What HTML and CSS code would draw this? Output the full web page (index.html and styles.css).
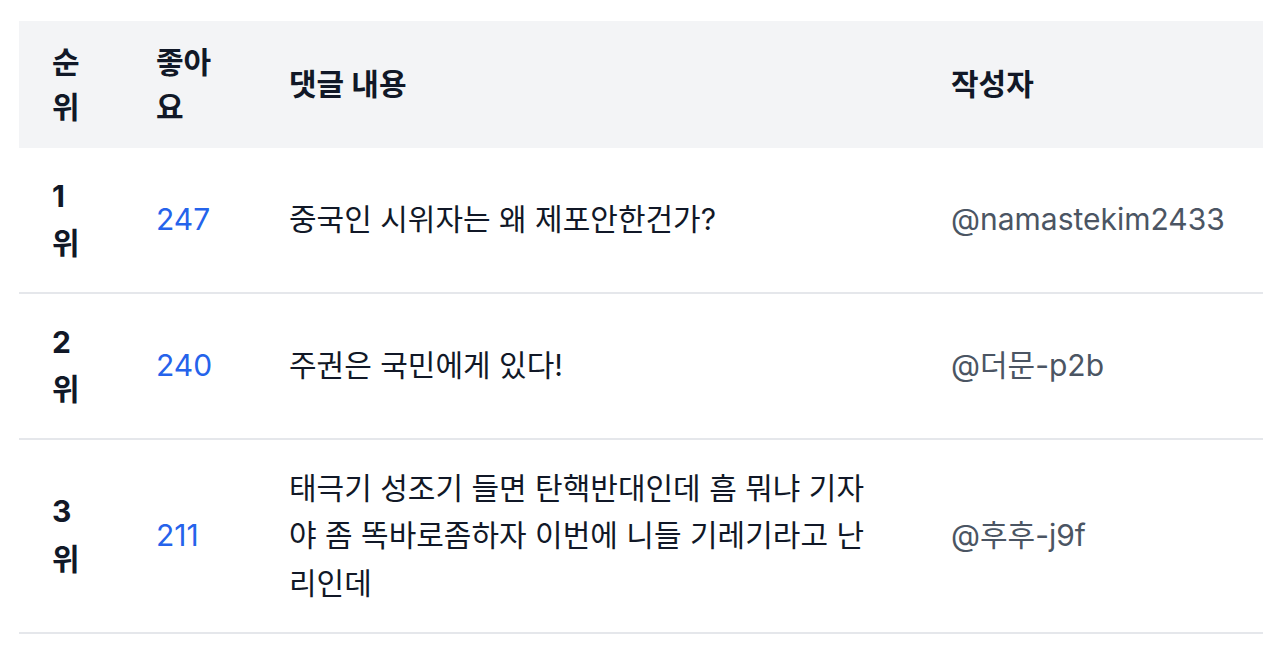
FILE: index.html
```html
<!DOCTYPE html>
<html lang="ko">
<head>
<meta charset="utf-8">
<link rel="stylesheet" href="styles.css">
</head>
<body>
<div class="page">
  <table class="ranking">
    <colgroup>
      <col class="c-rank">
      <col class="c-likes">
      <col class="c-text">
      <col class="c-author">
    </colgroup>
    <thead>
      <tr>
        <th class="rank">순위</th>
        <th>좋아요</th>
        <th>댓글 내용</th>
        <th>작성자</th>
      </tr>
    </thead>
    <tbody>
      <tr>
        <td class="rank">1위</td>
        <td class="likes">247</td>
        <td class="text"><div class="comment">중국인 시위자는 왜 제포안한건가?</div></td>
        <td class="author">@namastekim2433</td>
      </tr>
      <tr>
        <td class="rank">2위</td>
        <td class="likes">240</td>
        <td class="text"><div class="comment">주권은 국민에게 있다!</div></td>
        <td class="author">@더문-p2b</td>
      </tr>
      <tr>
        <td class="rank">3위</td>
        <td class="likes">211</td>
        <td class="text"><div class="comment">태극기 성조기 들면 탄핵반대인데 흠 뭐냐 기자야 좀 똑바로좀하자 이번에 니들 기레기라고 난리인데</div></td>
        <td class="author">@후후-j9f</td>
      </tr>
    </tbody>
  </table>
</div>
</body>
</html>
```

FILE: styles.css
```css
html, body {
  margin: 0;
  padding: 0;
  background: #ffffff;
}
body {
  font-family: "Inter", "Noto Sans CJK KR", sans-serif;
  font-feature-settings: "palt";
  color: #111827;
}
.page {
  padding: 21px 19px;
}
.ranking {
  width: 1244px;
  table-layout: fixed;
  border-collapse: collapse;
  border-spacing: 0;
}
.c-rank { width: 105px; }
.c-likes { width: 133px; }
.c-text { width: 662px; }
.c-author { width: 344px; }

.ranking th {
  background: #f3f4f6;
  text-align: left;
  font-weight: 700;
  font-size: 30px;
  line-height: 45px;
  padding: 18.5px 32px;
  vertical-align: middle;
  color: #111827;
}
.ranking td {
  font-size: 30px;
  line-height: 47.5px;
  padding: 24.5px 32px;
  vertical-align: middle;
  border-bottom: 2px solid #e5e7eb;
}
.ranking .rank {
  padding-left: 33px;
  padding-right: 38px;
  word-break: break-all;
}
.ranking td.rank {
  font-weight: 700;
}
.likes { color: #2563eb; }
.ranking td.text {
  padding-right: 8px;
}
.comment {
  max-width: 588px;
  word-break: break-all;
  color: #111827;
}
.author {
  color: #4b5563;
  font-size: 31px;
}
```
